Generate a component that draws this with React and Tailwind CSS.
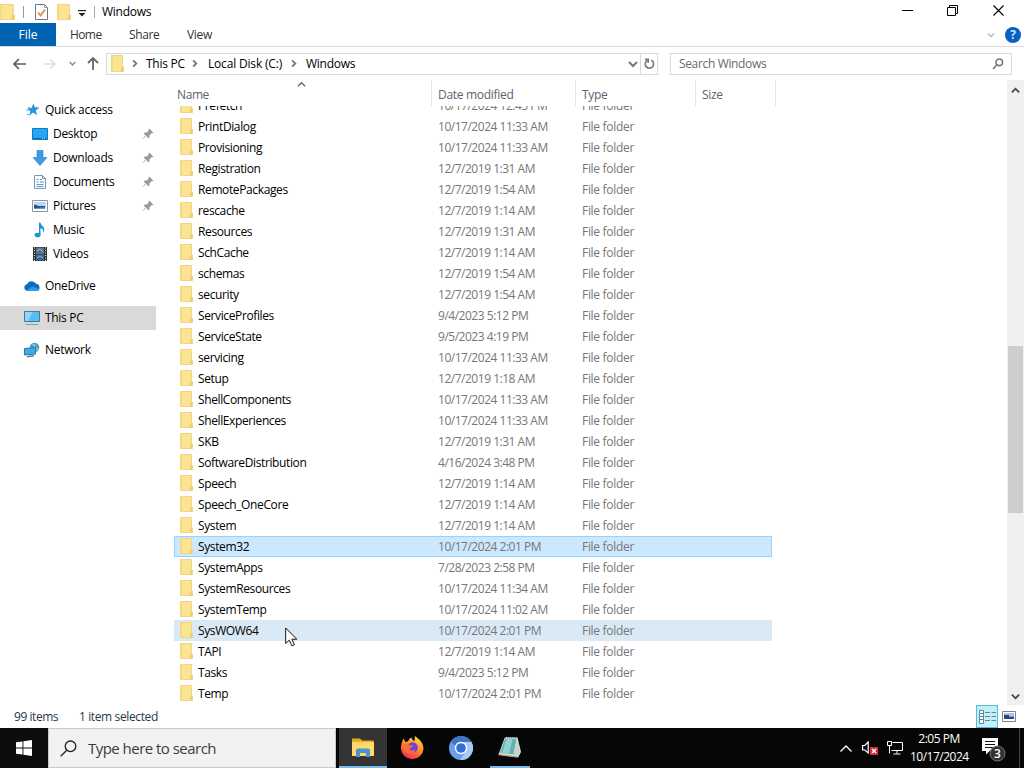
const folders = [
  ["Prefetch", "10/17/2024 12:45 PM"],
  ["PrintDialog", "10/17/2024 11:33 AM"],
  ["Provisioning", "10/17/2024 11:33 AM"],
  ["Registration", "12/7/2019 1:31 AM"],
  ["RemotePackages", "12/7/2019 1:54 AM"],
  ["rescache", "12/7/2019 1:14 AM"],
  ["Resources", "12/7/2019 1:31 AM"],
  ["SchCache", "12/7/2019 1:14 AM"],
  ["schemas", "12/7/2019 1:54 AM"],
  ["security", "12/7/2019 1:54 AM"],
  ["ServiceProfiles", "9/4/2023 5:12 PM"],
  ["ServiceState", "9/5/2023 4:19 PM"],
  ["servicing", "10/17/2024 11:33 AM"],
  ["Setup", "12/7/2019 1:18 AM"],
  ["ShellComponents", "10/17/2024 11:33 AM"],
  ["ShellExperiences", "10/17/2024 11:33 AM"],
  ["SKB", "12/7/2019 1:31 AM"],
  ["SoftwareDistribution", "4/16/2024 3:48 PM"],
  ["Speech", "12/7/2019 1:14 AM"],
  ["Speech_OneCore", "12/7/2019 1:14 AM"],
  ["System", "12/7/2019 1:14 AM"],
  ["System32", "10/17/2024 2:01 PM"],
  ["SystemApps", "7/28/2023 2:58 PM"],
  ["SystemResources", "10/17/2024 11:34 AM"],
  ["SystemTemp", "10/17/2024 11:02 AM"],
  ["SysWOW64", "10/17/2024 2:01 PM"],
  ["TAPI", "12/7/2019 1:14 AM"],
  ["Tasks", "9/4/2023 5:12 PM"],
  ["Temp", "10/17/2024 2:01 PM"],
];

const quickAccess = [
  { label: "Desktop", Icon: DesktopIcon, pinned: true },
  { label: "Downloads", Icon: DownloadIcon, pinned: true },
  { label: "Documents", Icon: DocumentIcon, pinned: true },
  { label: "Pictures", Icon: PictureIcon, pinned: true },
  { label: "Music", Icon: MusicIcon },
  { label: "Videos", Icon: VideoIcon },
];

export default function App() {
  return (
    <div className="relative flex h-[768px] w-[1024px] flex-col overflow-hidden bg-white font-['Open_Sans','Noto_Sans',sans-serif] text-[12px] leading-4 tracking-[-0.3px] text-black">
      <TitleBar />
      <RibbonTabs />
      <AddressBar />
      <div className="flex h-[625px]">
        <Sidebar />
        <FileList />
        <Scrollbar />
      </div>
      <StatusBar />
      <Taskbar />

      {/* mouse pointer */}
      <svg className="absolute left-[285px] top-[627px]" width="13" height="20" viewBox="0 0 13 20">
        <path d="M.7 1v15.5l3.6-3.3 2.6 5.6 2.5-1.1-2.5-5.5h4.9z" fill="#fff" stroke="#111" strokeWidth="1" />
      </svg>
    </div>
  );
}

/* ================= WINDOW CHROME ================= */
function TitleBar() {
  return (
    <div className="flex h-[23px] shrink-0 items-center">
      <Folder className="-ml-px h-4 w-4" />
      <div className="ml-[8px] h-3 w-px bg-[#999]" />
      <svg className="ml-[11px] mt-px" width="13" height="16" viewBox="0 0 13 16">
        <path d="M.5.5h9l3 3v12H.5z" fill="#fff" stroke="#6f7880" />
        <path d="M9.5.5v3h3" fill="none" stroke="#9aa0a5" />
        <path d="M3 8.5l2.5 3L10 5.500" fill="none" stroke="#e08a55" strokeWidth="1.8" />
      </svg>
      <Folder className="ml-[9px] mt-px h-4 w-[14px]" />
      <svg className="ml-[7px] mt-[3px]" width="8" height="7" viewBox="0 0 8 7">
        <path d="M0 .6h8" stroke="#222" strokeWidth="1.2" />
        <path d="M.5 3h7L4 6.500z" fill="#222" />
      </svg>
      <div className="ml-[8px] h-3 w-px bg-[#aaa]" />
      <span className="ml-[7px] tracking-[-0.25px]">Windows</span>
      <div className="ml-auto flex items-center">
        <svg className="mr-[34px] -mt-[2px]" width="11" height="11" viewBox="0 0 11 11">
          <path d="M0 5.500h11" stroke="#000" />
        </svg>
        <svg className="mr-[35px] -mt-[3px]" width="11" height="11" viewBox="0 0 11 11" fill="none" stroke="#000">
          <path d="M.5 2.500h8v8h-8zM2.500 2.500v-2h8v8h-2" />
        </svg>
        <svg className="mr-[20px] -mt-[3px]" width="11" height="11" viewBox="0 0 11 11">
          <path d="M.5.5l10 10M10.500.5l-10 10" stroke="#000" strokeWidth="1.1" />
        </svg>
      </div>
    </div>
  );
}

function RibbonTabs() {
  return (
    <div className="flex h-6 shrink-0 items-center border-b border-[#dadbdc] text-[#333]">
      <div className="flex h-[23px] w-14 items-center justify-center bg-[#0063b1] text-white tracking-[0px]">File</div>
      <span className="ml-[14px] mt-px w-[59px] tracking-[-0.6px]">Home</span>
      <span className="mt-px w-[58px] tracking-[-0.4px]">Share</span>
      <span className="mt-px">View</span>
      <Chevron className="ml-auto mr-[10px] w-2 text-[#aaa]" dir="down" />
      <div className="mr-[3px] flex size-4 items-center justify-center rounded-full bg-[#0a5fc0] text-[12px] font-bold text-[#bfeaff]">?</div>
    </div>
  );
}

function AddressBar() {
  return (
    <div className="flex h-[33px] shrink-0 items-center">
      <svg className="ml-[13px]" width="13" height="12" viewBox="0 0 13 12" fill="none" stroke="#5f5f5f" strokeWidth="1.7">
        <path d="M6 1L1 6l5 5M1 6h12" />
      </svg>
      <svg className="ml-[18px]" width="12" height="12" viewBox="0 0 12 12" fill="none" stroke="#dcdcdc" strokeWidth="1.5">
        <path d="M6.500 1.500L11 6l-4.500 4.500M11 6H0" />
      </svg>
      <Chevron className="ml-[13px] w-[7px] text-[#888]" dir="down" heavy />
      <svg className="ml-[11px]" width="12" height="13" viewBox="0 0 12 13" fill="none" stroke="#6a6a6a" strokeWidth="1.8">
        <path d="M1 6l5-5 5 5M6 1v12" />
      </svg>
      <div className="ml-[7px] flex h-[22px] w-[552px] items-center border border-[#d9d9d9]">
        <Folder className="ml-[4px] h-[17px] w-[13px]" />
        <Chevron className="ml-[6px] w-[9px] text-[#777]" dir="right" heavy />
        <span className="ml-[7px] w-[44px] whitespace-nowrap tracking-[-0.25px]">This PC</span>
        <Chevron className="w-[9px] text-[#777]" dir="right" heavy />
        <span className="ml-[9px] w-[80px] whitespace-nowrap tracking-[-0.18px]">Local Disk (C:)</span>
        <Chevron className="ml-[1px] w-[9px] text-[#777]" dir="right" heavy />
        <span className="ml-[8px] tracking-[-0.25px]">Windows</span>
        <Chevron className="ml-auto mr-[2px] w-[10px] text-[#777]" dir="down" heavy />
        <div className="flex h-full w-[17px] items-center justify-center border-l border-[#d9d9d9]">
          <svg width="11" height="12" viewBox="0 0 11 12" fill="none" stroke="#777" strokeWidth="1.6">
            <path d="M7.300 2.300a4.200 4.200 0 1 1-4.100.2M1 1.200h3.200v3.500" />
          </svg>
        </div>
      </div>
      <div className="ml-[12px] flex h-[22px] w-[342px] items-center border border-[#d9d9d9] pl-2 pr-[7px] text-[#6a6a6a]">
        <span className="tracking-[-0.35px]">Search Windows</span>
        <svg className="ml-auto" width="12" height="12" viewBox="0 0 12 12" fill="none" stroke="#777" strokeWidth="1.6">
          <circle cx="7.300" cy="4.300" r="3.300" />
          <path d="M4.900 6.800L1 11" />
        </svg>
      </div>
    </div>
  );
}

/* ================= SIDEBAR ================= */
function Sidebar() {
  return (
    <div className="w-[156px] shrink-0 pt-[18px]">
      <SideRow label="Quick access" Icon={StarIcon} />
      {quickAccess.map((item) => (
        <SideRow key={item.label} nested {...item} />
      ))}
      <div className="mt-2">
        <SideRow label="OneDrive" Icon={CloudIcon} />
      </div>
      <div className="mt-2 bg-[#d9d9d9]">
        <SideRow label="This PC" Icon={ComputerIcon} />
      </div>
      <div className="mt-2">
        <SideRow label="Network" Icon={NetworkIcon} />
      </div>
    </div>
  );
}

function SideRow({ label, Icon, nested, pinned }) {
  return (
    <div className={nested ? "flex h-6 items-center pl-8 pr-[2px]" : "flex h-6 items-center pl-6"}>
      <Icon />
      <span className="ml-[5px] whitespace-nowrap">{label}</span>
      {pinned && (
        <svg className="ml-auto" width="12" height="12" viewBox="0 0 12 12">
          <path d="M7.300.6l4.100 4.100-1.300.7-.5-.2-2.200 2.200.1 2-1 1-2.300-2.300L1 11.300l-.4-.4 3.100-3.300-2.200-2.200 1-1 2.100.1 2.100-2.200-.2-.6z" fill="#999da1" />
        </svg>
      )}
    </div>
  );
}

/* ================= FILE LIST ================= */
function FileList() {
  return (
    <div className="ml-[18px] flex-1">
      <div className="relative flex h-[26px] text-[#5b6470]">
        <div className="w-[258px] border-r border-[#e5e5e5] pl-[3px] pt-[7px] tracking-[-0.4px]">Name</div>
        <div className="w-[144px] border-r border-[#e5e5e5] pl-[6px] pt-[7px] tracking-[-0.3px]">Date modified</div>
        <div className="w-[120px] border-r border-[#e5e5e5] pl-[6px] pt-[7px]">Type</div>
        <div className="w-[80px] border-r border-[#e5e5e5] pl-[6px] pt-[7px]">Size</div>
        <Chevron className="absolute left-[123px] top-0 w-[9px] text-[#666]" dir="up" />
      </div>
      <div className="h-[598px] overflow-hidden">
        <div className="-mt-[11px] w-[598px]">
          {folders.map(([name, date]) => (
            <FileRow key={name} name={name} date={date} />
          ))}
        </div>
      </div>
    </div>
  );
}

function FileRow({ name, date }) {
  let state = "";
  if (name === "System32") state = "bg-[#cce8ff] outline outline-1 -outline-offset-1 outline-[#99d1ff]";
  if (name === "SysWOW64") state = "bg-[#d9e9f6]";
  return (
    <div className={`flex h-[21px] items-center pl-[6px] ${state}`}>
      <Folder className="-mt-px h-4 w-[13px]" />
      <span className="ml-[5px] w-[240px] tracking-[-0.38px]">{name}</span>
      <span className="w-[144px] tracking-[-0.48px] text-[#777]">{date}</span>
      <span className="text-[#777]">File folder</span>
    </div>
  );
}

function Scrollbar() {
  return (
    <div className="flex w-[17px] shrink-0 flex-col items-center bg-[#f0f0f0]">
      <Chevron className="mt-[6px] w-[9px] text-[#444]" dir="up" heavy />
      <div className="mt-[251px] h-[167px] w-[15px] bg-[#cdcdcd]" />
      <Chevron className="mb-[4px] mt-auto w-[9px] text-[#444]" dir="down" heavy />
    </div>
  );
}

function StatusBar() {
  return (
    <div className="flex h-[23px] shrink-0 items-center pl-[14px] text-[#26394d]">
      <span className="w-[65px] tracking-[-0.45px]">99 items</span>
      <span className="tracking-[-0.38px]">1 item selected</span>
      <div className="ml-auto flex h-[23px] w-[22px] items-center justify-center border border-[#4cbfdc] bg-[#c5eef8]">
        <svg width="17" height="14" viewBox="0 0 17 14" fill="none" stroke="#5a8998">
          <path d="M.5.5h4v13h-4z" fill="#fff" />
          <path d="M.5 3.500h4M.5 6.500h4M.5 9.500h4" />
          <path d="M6 2.500h5M12.500 2.500H17M6 6.500h5M12.500 6.500H17M6 10.500h5M12.500 10.500H17" />
        </svg>
      </div>
      <svg className="ml-[4px] mr-[8px] -mt-px" width="14" height="11" viewBox="0 0 14 11">
        <path d="M.5.5h13v10H.5z" fill="#fff" stroke="#7b8591" />
        <path d="M2 2h10v3H2z" fill="#a8c5ee" />
        <path d="M2 4h5v1.500h5V8H2z" fill="#26477c" />
      </svg>
    </div>
  );
}

/* ================= TASKBAR ================= */
function Taskbar() {
  return (
    <div className="flex h-10 shrink-0 bg-[#060606] text-white">
      <div className="flex w-12 items-center justify-center bg-[#0d0d0d]">
        <svg width="16" height="16" viewBox="0 0 16 16" fill="#fff">
          <path d="M0 2.300l6.500-.9v6.100H0zM7.400 1.300L16 0v7.500H7.400zM0 8.400h6.500v6.200L0 13.700zM7.400 8.400H16V16l-8.600-1.200z" />
        </svg>
      </div>
      <div className="flex w-[288px] items-center border border-[#c9c9c9] bg-[#f2f2f2] pl-[11px] text-[15px] leading-5 tracking-[-0.53px] text-[#3c3c3c]">
        <svg width="17" height="17" viewBox="0 0 17 17" fill="none" stroke="#222" strokeWidth="1.3">
          <circle cx="10.500" cy="6.300" r="5.300" />
          <path d="M6.700 10.200L.7 16.300" />
        </svg>
        <span className="ml-[11px]">Type here to search</span>
      </div>

      <div className="ml-[3px] flex w-12 items-center justify-center border-b-2 border-[#76b9ed] bg-[#343434]">
        <svg width="22" height="20" viewBox="0 0 22 20">
          <path d="M0 1.500h8l2 2h11.500V19H0z" fill="#e8ac28" />
          <path d="M0 5h22v14H0z" fill="#ffda6b" />
          <path d="M4 20v-6.500a2 2 0 0 1 2-2h10a2 2 0 0 1 2 2V20h-4v-4H8v4z" fill="#4694d8" />
        </svg>
      </div>
      <div className="flex w-[49px] items-center justify-center">
        <FirefoxIcon />
      </div>
      <div className="flex w-[49px] items-center justify-center">
        <svg width="24" height="24" viewBox="0 0 24 24">
          <circle cx="12" cy="12" r="12" fill="#6a9fea" />
          <path d="M12 6h10.400A12 12 0 0 1 11 24l6.200-9z" fill="#a9c9f8" />
          <path d="M1.700 5.800A12 12 0 0 1 22.400 6H12a6 6 0 0 0-5.500 4z" fill="#3f74c8" />
          <circle cx="12" cy="12" r="6.200" fill="#fff" />
          <circle cx="12" cy="12" r="4.800" fill="#2c70d8" />
        </svg>
      </div>
      <div className="mx-[5px] flex w-10 items-center justify-center border-b-2 border-[#76b9ed]">
        <svg width="24" height="22" viewBox="0 0 24 22">
          <path d="M7 1L19.500 1.500L23 16l-3 5.500L.5 18.500z" fill="#dce5e4" />
          <path d="M7 2.500L18.500 2.500L15.500 18.500L2 17z" fill="#5fb3b3" />
          <path d="M8.500 3l6 .2-3.500 14.500-7-1z" fill="#91d1cf" />
          <path d="M19 2.500l3.500 13.500-2.500 5-4.500-2z" fill="#c9d3d2" />
          <path d="M.5 18l19 2.500-.3 1L.5 19.300z" fill="#bc9d68" />
          <path d="M7 1.500h12" stroke="#777" strokeWidth="1.200" strokeDasharray="1 1" />
        </svg>
      </div>

      {/* tray */}
      <div className="ml-auto flex items-center">
        <svg width="12" height="7" viewBox="0 0 12 7" fill="none" stroke="#fff" strokeWidth="1.300">
          <path d="M.5 6.500L6 1l5.500 5.500" />
        </svg>
        <svg className="ml-[10px]" width="17" height="14" viewBox="0 0 17 14">
          <path d="M.6 4.500h2.200L6.200 1v11L2.800 9H.6z" fill="none" stroke="#fff" strokeWidth="1.200" />
          <path d="M8 6h8v8H8z" fill="#d92c37" />
          <path d="M10 8l4 4M14 8l-4 4" stroke="#fff" strokeWidth="1.400" />
        </svg>
        <svg className="ml-[8px]" width="16" height="14" viewBox="0 0 16 14" fill="none" stroke="#fff">
          <path d="M5.500 1.500h10v8h-11M10 9.500v3M6.500 13h7" />
          <path d="M.5.5h4v4h-4zM2.500 4.500v8" />
        </svg>
        <div className="ml-[7px] w-[58px] whitespace-nowrap text-center leading-[18px] tracking-[-0.5px]">
          <div>2:05 PM</div>
          <div>10/17/2024</div>
        </div>
        <svg className="ml-[14px] mr-[13px] mt-[3px]" width="24" height="24" viewBox="0 0 24 24">
          <path d="M0 0h16v13H7.500L4 16.500V13H0z" fill="#fff" />
          <path d="M3 3.500h10M3 6.500h10M3 9.500h8" stroke="#111" />
          <circle cx="15.500" cy="15.500" r="7.500" fill="#333" stroke="#777" strokeWidth="1" />
          <text x="15.300" y="19.800" fill="#fff" fontSize="12" fontWeight="600" textAnchor="middle">3</text>
        </svg>
        <div className="mr-[4px] h-10 w-px bg-[#444]" />
      </div>
    </div>
  );
}

/* ================= ICONS ================= */
function Chevron({ dir, className, heavy }) {
  const paths = {
    down: "M1 3l4 4 4-4",
    up: "M1 7l4-4 4 4",
    right: "M3.500 1.500L7 5 3.500 8.500",
  };
  return (
    <svg className={className} viewBox="0 0 10 10" fill="none" stroke="currentColor" strokeWidth={heavy ? 2 : 1.5}>
      <path d={paths[dir]} />
    </svg>
  );
}

function Folder({ className }) {
  return (
    <svg className={className} viewBox="0 0 13 16" preserveAspectRatio="none">
      <path d="M.5.5h11v10l1 1v4H.5z" fill="#fce495" stroke="#f0d67c" />
      <path d="M1 1h1v14H1z" fill="#f7d983" />
      <path d="M10.500 11h2v4.500h-3z" fill="#f0ce72" />
    </svg>
  );
}

function StarIcon() {
  return (
    <svg width="16" height="16" viewBox="0 0 16 16">
      <path d="M9.500 1.500l1.300 3.800 4.700.2-3.700 2.900 1.300 4.800-4.100-2.600L5.100 14l1.300-4.600L3.200 6.400l4.200-.4z" fill="#2596d8" />
      <path d="M2 8h3M2.500 12.500h2.500M4 5.500h2" stroke="#62b5e4" />
    </svg>
  );
}

function DesktopIcon() {
  return (
    <svg width="16" height="16" viewBox="0 0 16 16">
      <path d="M.5 2.500h15v11H.5z" fill="#27a6f3" stroke="#1479c4" />
      <path d="M1 12.500h14" stroke="#1467a8" />
      <path d="M10 12.500h4" stroke="#8bd2fa" strokeDasharray="1 1" />
    </svg>
  );
}

function DownloadIcon() {
  return (
    <svg width="16" height="16" viewBox="0 0 16 16">
      <path d="M5 .5h6v7h4l-7 8-7-8h4z" fill="#3f98e4" stroke="#2d7fc7" strokeWidth=".6" />
    </svg>
  );
}

function DocumentIcon() {
  return (
    <svg width="16" height="16" viewBox="0 0 16 16">
      <path d="M2.500 1.500h8l3 3v10h-11z" fill="#fafcff" stroke="#8294a4" />
      <path d="M10.500 1.500v3h3" fill="none" stroke="#8294a4" />
      <path d="M4.500 5.500h2M8 5.500h2M4.500 8h2M8 8h4M4.500 10.500h7M4.500 12.500h7" stroke="#4aa0d8" strokeWidth="1.200" />
    </svg>
  );
}

function PictureIcon() {
  return (
    <svg width="16" height="16" viewBox="0 0 16 16">
      <path d="M.5 2.500h15v11H.5z" fill="#fff" stroke="#8b97a5" />
      <path d="M2 4h12v7H2z" fill="#b7d7f7" />
      <path d="M2 6.500l5 1.500h6v2.500H2z" fill="#2c4f7c" />
      <path d="M8 9.500h5V11H5z" fill="#6e9cc6" />
    </svg>
  );
}

function MusicIcon() {
  return (
    <svg width="16" height="16" viewBox="0 0 16 16" fill="#1b96d6">
      <path d="M7 .5h1.500c.2 3 4.500 4 3.700 8-.1.900-.6 1.500-1.200 2.200.7-2.700-.5-3.700-2.500-4.400V13H7z" />
      <ellipse cx="5.600" cy="13" rx="3" ry="2.300" />
    </svg>
  );
}

function VideoIcon() {
  return (
    <svg width="16" height="16" viewBox="0 0 16 16">
      <path d="M1 1h14v14H1z" fill="#343434" />
      <path d="M4 1.500h8V8H4z" fill="#57738c" />
      <path d="M4 8.500h8v6H4z" fill="#35669c" />
      <path d="M5 5l3-2 3 3M5 12l3-2 3 2" stroke="#a6b8c5" fill="none" />
      <path d="M2.500 1.500v14M13.500 1.500v14" stroke="#ddd" strokeDasharray="1 1.500" />
    </svg>
  );
}

function CloudIcon() {
  return (
    <svg width="16" height="16" viewBox="0 0 16 16">
      <path d="M3.500 13A3.400 3.400 0 0 1 3 6.300 5 5 0 0 1 12 5.800a3.700 3.700 0 0 1 1 7.200z" fill="#0f6cbd" />
      <path d="M2 12.600l6.500-4.200 7 2.800A3 3 0 0 1 13 13H3.500z" fill="#2b9be6" />
    </svg>
  );
}

function ComputerIcon() {
  return (
    <svg width="16" height="16" viewBox="0 0 16 16">
      <path d="M.5 1.500h15v10H.5z" fill="#55bdf2" stroke="#4c7896" />
      <path d="M1 2h8L4 11H1z" fill="#8ed6fa" />
      <path d="M1.500 14.500h13" stroke="#6ba6ca" />
      <path d="M6 12.500h4" stroke="#b8ccda" />
    </svg>
  );
}

function NetworkIcon() {
  return (
    <svg width="16" height="16" viewBox="0 0 16 16">
      <circle cx="10.500" cy="5.500" r="4.800" fill="#4ca4cf" />
      <path d="M8 2l3 1-1 3 4 1-1 3" fill="none" stroke="#a6d5a5" />
      <path d="M.5 6.500l11-1v6.500l-11 1z" fill="#42aae9" stroke="#2877ad" />
      <path d="M3 14.800l7-1" stroke="#5d7e93" strokeWidth="1.400" />
    </svg>
  );
}

function FirefoxIcon() {
  return (
    <svg width="24" height="24" viewBox="0 0 24 24">
      <defs>
        <linearGradient id="fox" x1=".8" y1="0" x2=".3" y2="1">
          <stop offset="0" stopColor="#ffe03c" />
          <stop offset=".5" stopColor="#ff8b2c" />
          <stop offset="1" stopColor="#f4245c" />
        </linearGradient>
      </defs>
      <path d="M3.500 2.500L5.500 6 8 5.500C9 3 10 2 11.500 1.500c.2 2 1.500 3 3 3.500L15 0c4 3 8.500 6.500 8.500 13A11.300 11.300 0 0 1 1 13c-.2-4 1-7.500 2.500-10.500z" fill="url(#fox)" />
      <circle cx="12.500" cy="11.500" r="5.300" fill="#7541d5" />
      <path d="M3 8c3-1 5-.5 6.500 1l3.500.7c-.5 2-3 1.800-3.500 3.300.5 2 4 2 6 .5-.5 3-3.500 4.800-6.500 4.200-4-.7-6.500-4.700-6-9.700z" fill="#ff6a35" />
    </svg>
  );
}
